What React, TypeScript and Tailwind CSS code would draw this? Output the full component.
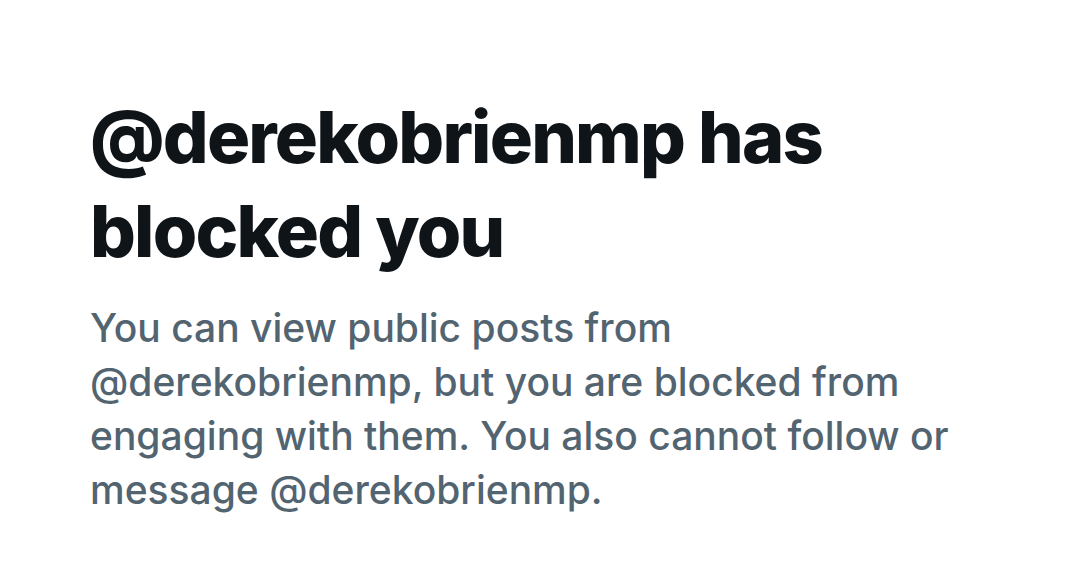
export default function App() {
  return (
    <div className="h-[568px] w-[1080px] bg-white" style={{ fontFamily: "Inter, 'Noto Sans', sans-serif" }}>
      <div className="px-[90px] pt-[90px]">
        <h1 className="text-[72px] font-extrabold leading-[94px] tracking-[-1.8px] text-[#0f1419]">
          @derekobrienmp has
          <br />
          blocked you
        </h1>
        <p className="mt-[23px] w-[900px] text-[39px] font-[450] leading-[54px] text-[#536471]">
          You can view public posts from @derekobrienmp, but you are blocked from engaging with them. You also cannot
          follow or message @derekobrienmp.
        </p>
      </div>
    </div>
  );
}
